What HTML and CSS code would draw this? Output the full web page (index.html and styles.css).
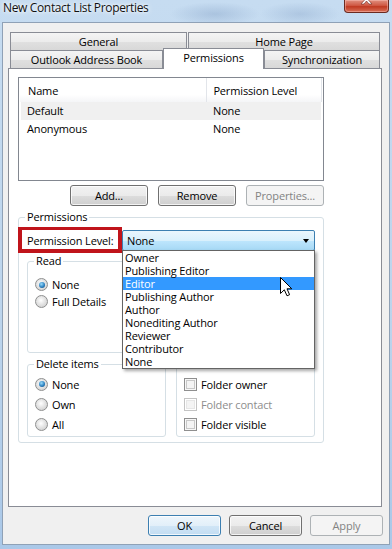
FILE: index.html
```html
<!DOCTYPE html>
<html>
<head>
<meta charset="utf-8">
<link rel="stylesheet" href="styles.css">
</head>
<body>
<div class="titlebar">
  <span class="title">New Contact List Properties</span>
  <div class="close">
    <svg width="45" height="13" viewBox="0 0 45 13"><path d="M17 -4 L20 -4 L22.5 -1 L25 -4 L28 -4 L24 0.5 L28 5 L25 5 L22.5 2 L20 5 L17 5 L21 0.5 Z" fill="#fff" stroke="#6a2418" stroke-width="0.6"/></svg>
  </div>
</div>
<div class="dialog">
  <div class="tabs">
    <div class="tabrow">
      <div class="tab t-general">General</div>
      <div class="tab t-home">Home Page</div>
    </div>
    <div class="tabrow">
      <div class="tab t-oab">Outlook Address Book</div>
      <div class="tab t-perm active">Permissions</div>
      <div class="tab t-sync">Synchronization</div>
    </div>
  </div>
  <div class="panel">
    <div class="listview">
      <div class="lv-head">
        <div class="hc hc1">Name</div>
        <div class="hc hc2">Permission Level</div>
      </div>
      <div class="lv-row sel"><span class="c1">Default</span><span class="c2">None</span></div>
      <div class="lv-row"><span class="c1">Anonymous</span><span class="c2">None</span></div>
    </div>
    <div class="btnrow">
      <button class="btn">Add...</button>
      <button class="btn">Remove</button>
      <button class="btn disabled">Properties...</button>
    </div>
    <div class="group perm-group">
      <div class="group-title">Permissions</div>
      <div class="level-row">
        <span class="level-label">Permission Level:</span>
        <div class="combo"><span>None</span><span class="arrow"></span></div>
      </div>
      <div class="boxes">
        <div class="group box">
          <div class="group-title">Read</div>
          <div class="opts read-opts">
            <div class="opt"><span class="radio on"></span>None</div>
            <div class="opt"><span class="radio"></span>Full Details</div>
          </div>
        </div>
        <div class="group box"></div>
        <div class="group box">
          <div class="group-title">Delete items</div>
          <div class="opts del-opts">
            <div class="opt"><span class="radio on"></span>None</div>
            <div class="opt"><span class="radio"></span>Own</div>
            <div class="opt"><span class="radio"></span>All</div>
          </div>
        </div>
        <div class="group box">
          <div class="group-title blank"></div>
          <div class="opts del-opts">
            <div class="opt"><span class="check"></span>Folder owner</div>
            <div class="opt dis"><span class="check"></span>Folder contact</div>
            <div class="opt"><span class="check"></span>Folder visible</div>
          </div>
        </div>
      </div>
      <div class="highlight"></div>
      <div class="dropdown">
        <div class="item">Owner</div>
        <div class="item">Publishing Editor</div>
        <div class="item hot">Editor</div>
        <div class="item">Publishing Author</div>
        <div class="item">Author</div>
        <div class="item">Nonediting Author</div>
        <div class="item">Reviewer</div>
        <div class="item">Contributor</div>
        <div class="item">None</div>
      </div>
      <svg class="cursor" width="13" height="20" viewBox="0 0 13 20"><path d="M0.5 0.5 L0.5 16.5 L4.3 12.8 L7 18.8 L9.6 17.7 L7 11.8 L11.8 11.8 Z" fill="#fff" stroke="#000" stroke-width="1" stroke-linejoin="miter"/></svg>
    </div>
  </div>
  <div class="footer">
    <button class="btn fbtn default">OK</button>
    <button class="btn fbtn">Cancel</button>
    <button class="btn fbtn disabled">Apply</button>
  </div>
</div>
</body>
</html>
```
FILE: styles.css
```css
* { box-sizing: border-box; }
html, body { margin: 0; padding: 0; }
body {
  width: 392px;
  height: 549px;
  overflow: hidden;
  font-family: "Open Sans", "Noto Sans", sans-serif;
  font-size: 11px;
  letter-spacing: -0.15px;
  color: #000;
  background:
    radial-gradient(ellipse 45px 12px at 215px 14px, rgba(120,150,190,0.35), transparent),
    radial-gradient(ellipse 40px 12px at 300px 14px, rgba(120,150,190,0.3), transparent),
    linear-gradient(180deg, #c6dcf1 0%, #bcd4ec 60%, #aac8e8 100%);
}
.titlebar {
  height: 22px;
  display: flex;
  align-items: flex-start;
}
.title {
  margin: 0 0 0 3px;
  font-size: 12px;
  letter-spacing: -0.35px;
  line-height: 16px;
  color: #111;
  text-shadow: 0 0 6px #fff, 0 0 3px #fff;
}
.close {
  margin-left: auto;
  margin-right: 3px;
  width: 45px;
  height: 13px;
  border: 1px solid #6b2a20;
  border-top: none;
  border-radius: 0 0 4px 4px;
  background: linear-gradient(180deg, #e09080 0%, #d05a45 45%, #c03a22 55%, #d87058 100%);
  box-shadow: inset 0 0 0 1px rgba(255,200,190,0.45);
  overflow: hidden;
  position: relative;
}
.close svg { display: block; margin: -1px 0 0 -1px; }
.dialog {
  margin-left: 2px;
  width: 388px;
  height: 523px;
  border: 1px solid #8fa1b6;
  background: #f0f0f0;
  padding: 9px 6px 8px 5px;
}
.tabs { padding-left: 2px; }
.tabrow { display: flex; height: 18px; }
.tab {
  height: 18px;
  border: 1px solid #898c95;
  border-bottom: none;
  background: linear-gradient(180deg, #f4f4f4 0%, #ececec 50%, #e0e0e0 51%, #d8d8d8 100%);
  text-align: center;
  line-height: 17px;
}
.t-general { width: 177px; }
.t-home { width: 192px; margin-left: 1px; }
.t-oab { width: 153px; }
.t-perm { width: 101px; }
.t-sync { width: 116px; }
.tab.active {
  position: relative;
  z-index: 2;
  margin-top: -2px;
  height: 21px;
  background: #fff;
  line-height: 18px;
}
.panel {
  width: 374px;
  height: 439px;
  background: #fff;
  border: 1px solid #898c95;
  padding: 8px 0 0 9px;
}
.listview {
  width: 306px;
  height: 104px;
  border: 1px solid #828790;
  padding: 0 1px;
}
.lv-head {
  display: flex;
  height: 24px;
  background: linear-gradient(180deg, #fff 0%, #fff 70%, #f4f5f7 100%);
}
.hc {
  line-height: 26px;
  border-right: 1px solid #e2e5ea;
}
.hc1 { width: 188px; padding-left: 8px; }
.hc2 { width: 115px; padding-left: 6px; }
.lv-row {
  display: flex;
  height: 18px;
  line-height: 18px;
  margin: 0 1px;
}
.lv-row.sel { background: #f0f0f0; }
.lv-row .c1 { width: 186px; padding-left: 6px; }
.lv-row .c2 { padding-left: 6px; }
.btnrow {
  width: 306px;
  margin-top: 4px;
  display: flex;
  justify-content: flex-end;
  gap: 10px;
}
.btn {
  width: 78px;
  height: 21px;
  padding: 0;
  border: 1px solid #707070;
  border-radius: 3px;
  background: linear-gradient(180deg, #f2f2f2 0%, #ebebeb 50%, #dddddd 51%, #cfcfcf 100%);
  box-shadow: inset 0 0 0 1px rgba(255,255,255,0.75);
  font-family: inherit;
  font-size: 11px;
  letter-spacing: -0.15px;
  color: #000;
  line-height: 18px;
}
.btn.disabled {
  border-color: #adb2b5;
  background: #f4f4f4;
  box-shadow: none;
  color: #838383;
}
.btn.default {
  border-color: #3c7fb1;
  background: linear-gradient(180deg, #eef6fc 0%, #e2eff9 50%, #d0e5f6 51%, #c3ddf2 100%);
}
.group {
  border: 1px solid #d5dfe5;
  border-radius: 3px;
}
.perm-group {
  position: relative;
  width: 306px;
  margin-top: 11px;
  padding-bottom: 5px;
}
.group-title {
  width: fit-content;
  margin: -8px 0 0 6px;
  padding: 0 2px;
  line-height: 14px;
  height: 14px;
  background: #fff;
}
.group-title.blank { width: 30px; }
.level-row {
  display: flex;
  align-items: center;
  margin-top: 6px;
  height: 21px;
}
.level-label {
  width: 103px;
  padding-left: 8px;
}
.combo {
  width: 193px;
  height: 21px;
  border: 1px solid #3c7fb1;
  border-radius: 2px;
  background: linear-gradient(180deg, #eaf6fd 0%, #d9f0fc 50%, #bee6fd 51%, #a7d9f5 100%);
  display: flex;
  align-items: center;
  padding-left: 4px;
}
.arrow {
  margin-left: auto;
  margin-right: 5px;
  width: 0;
  height: 0;
  border-left: 3.5px solid transparent;
  border-right: 3.5px solid transparent;
  border-top: 4px solid #000;
}
.boxes {
  margin-top: 10px;
  padding-left: 8px;
  display: grid;
  grid-template-columns: 139px 139px;
  grid-template-rows: 92px 73px;
  column-gap: 10px;
  row-gap: 11px;
}
.box { position: relative; }
.opts { padding-left: 7px; }
.read-opts { margin-top: 8px; }
.read-opts .opt { height: 17px; }
.del-opts { margin-top: 3px; }
.del-opts .opt { height: 20px; }
.opt {
  display: flex;
  align-items: center;
  gap: 4px;
}
.opt.dis { color: #8d8d8d; }
.radio {
  position: relative;
  width: 13px;
  height: 13px;
  border-radius: 50%;
  border: 1px solid #8e8f8f;
  background: radial-gradient(circle at 45% 40%, #ffffff 0%, #e4e4e4 45%, #c9c9c9 100%);
  flex: none;
}
.radio.on::after {
  content: "";
  position: absolute;
  left: 2.5px;
  top: 2.5px;
  width: 6px;
  height: 6px;
  border-radius: 50%;
  background: radial-gradient(circle at 40% 35%, #9bdcfb 0%, #2d83c2 55%, #0d3f6e 100%);
}
.check {
  width: 13px;
  height: 13px;
  border: 1px solid #8f8f8f;
  background: #f4f4f4;
  box-shadow: inset 0 0 0 1px #f7f7f7, inset 0 0 0 2px #c8c8c8;
  flex: none;
}
.opt.dis .check {
  border-color: #c4c4c4;
  box-shadow: inset 0 0 0 1px #fff, inset 0 0 0 2px #e6e6e6;
}
.highlight {
  position: absolute;
  left: -1px;
  top: 9px;
  width: 104px;
  height: 26px;
  border: 4px solid #c0141b;
  border-top-width: 3px;
}
.dropdown {
  position: absolute;
  left: 103px;
  top: 32px;
  width: 193px;
  height: 119px;
  border: 1px solid #646464;
  background: #fff;
  box-shadow: 2px 2px 3px rgba(0,0,0,0.35);
}
.item {
  height: 13px;
  line-height: 13px;
  padding-left: 2px;
  white-space: nowrap;
}
.item.hot { background: #3399ff; color: #fff; }
.cursor {
  position: absolute;
  left: 261px;
  top: 59px;
}
.footer {
  margin-top: 8px;
  display: flex;
  justify-content: flex-end;
  gap: 8px;
}
.fbtn { width: 73px; }
```
